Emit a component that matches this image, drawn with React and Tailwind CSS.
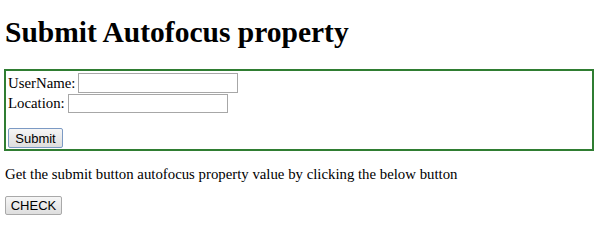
import React from "react";

const btn =
  "font-['Liberation_Sans',Arial,sans-serif] text-[13px] leading-none text-black rounded-[2px] bg-gradient-to-b from-[#f6f6f6] to-[#dedede] flex items-center justify-center";

export default function App() {
  return (
    <div className="w-[600px] h-[227px] overflow-hidden bg-white text-black font-['Liberation_Serif','Times_New_Roman',serif] pl-[4px] pr-[6px]">
      <h1 className="text-[29.5px] font-bold leading-[33px] pt-[16px] pl-[1px]">
        Submit Autofocus property
      </h1>
      <form
        className="mt-[20px] h-[82px] border-2 border-[#2f7d32] pl-[2px] pt-[2px] text-[14.8px] leading-[17px]"
        onSubmit={(e) => e.preventDefault()}
      >
        <div className="flex items-center h-[20px]">
          <span>UserName:</span>
          <input
            type="text"
            className="ml-[3px] w-[160px] h-[20px] border border-[#a7a7a7] bg-white outline-none"
          />
        </div>
        <div className="flex items-center h-[20px]">
          <span>Location:</span>
          <input
            type="text"
            className="ml-[3px] w-[160px] h-[19px] border border-[#a7a7a7] bg-white outline-none"
          />
        </div>
        <div className="h-[15px]" />
        <button
          type="submit"
          className={`${btn} w-[55px] h-[20px] border border-[#7c9ac4]`}
        >
          Submit
        </button>
      </form>
      <p className="text-[14.8px] leading-[17px] mt-[15px] pl-[1px]">
        Get the submit button autofocus property value by clicking the below button
      </p>
      <button
        type="button"
        className={`${btn} mt-[13px] ml-[1px] w-[57px] h-[19px] border border-[#a9a9a9]`}
      >
        CHECK
      </button>
    </div>
  );
}
